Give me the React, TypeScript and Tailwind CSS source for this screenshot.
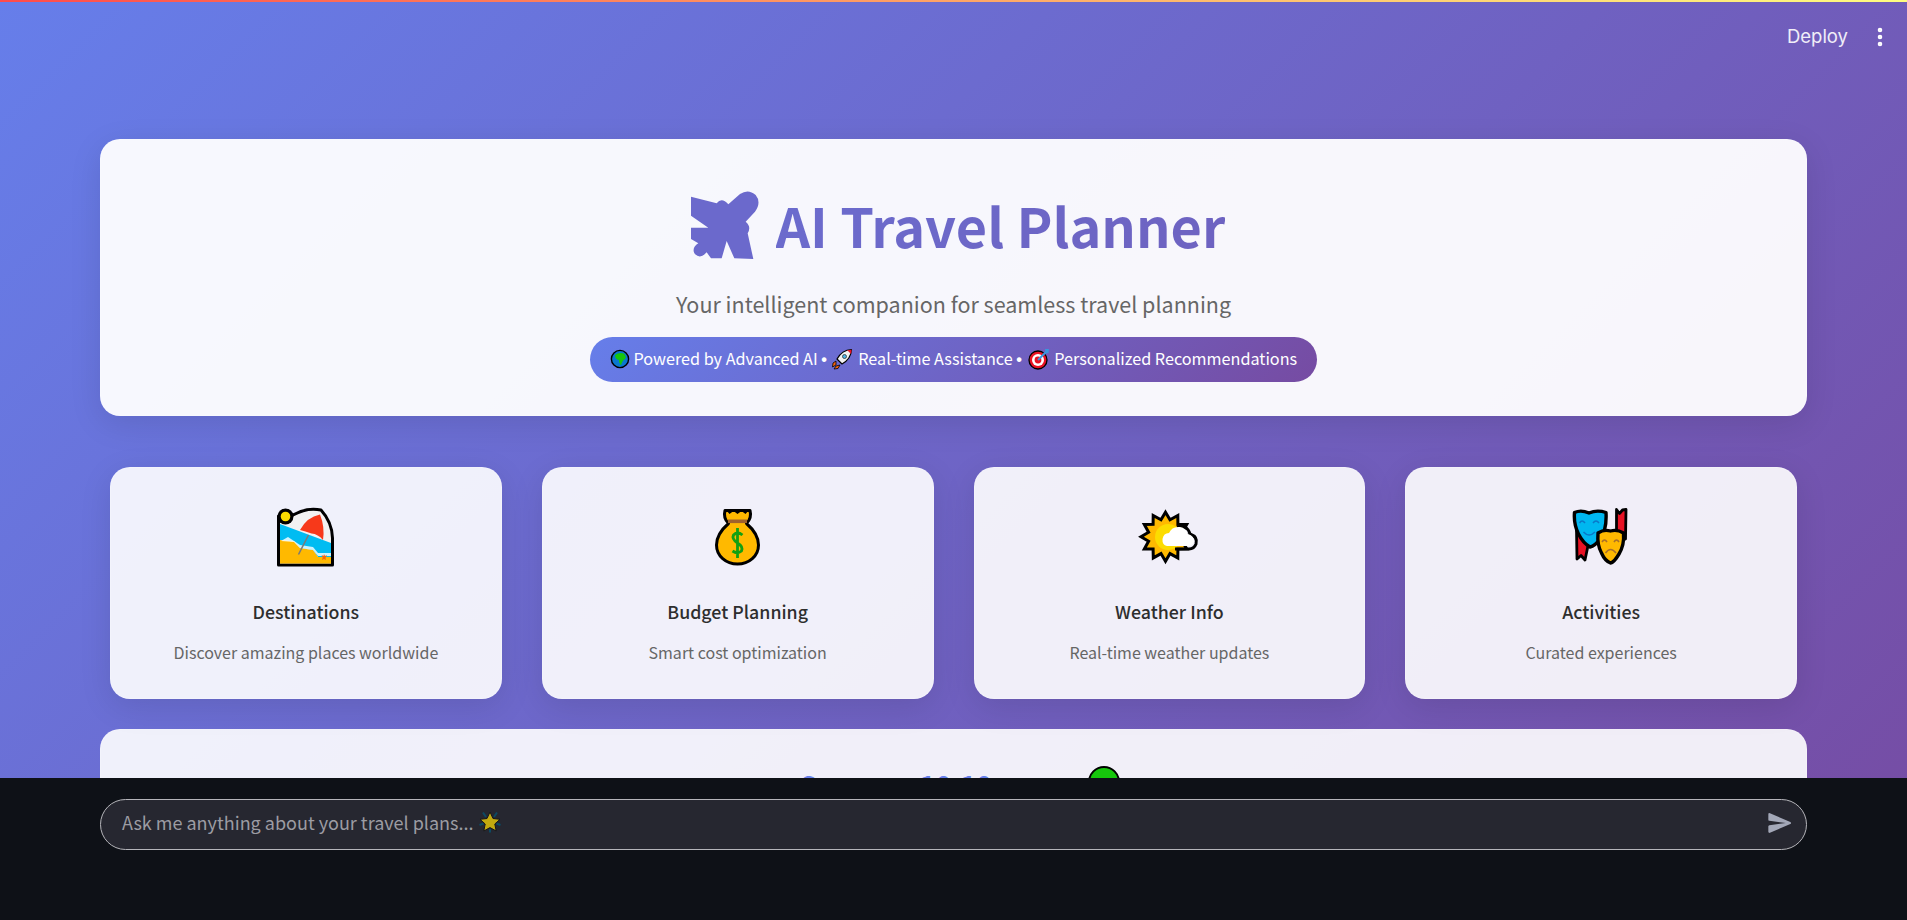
import { MoreVertical } from 'lucide-react';

const features = [
  { title: 'Destinations', text: 'Discover amazing places worldwide', icon: <BeachIcon /> },
  { title: 'Budget Planning', text: 'Smart cost optimization', icon: <BagIcon /> },
  { title: 'Weather Info', text: 'Real-time weather updates', icon: <SunCloudIcon /> },
  { title: 'Activities', text: 'Curated experiences', icon: <MasksIcon /> },
];

function PlaneGlyph() {
  return (
    <svg viewBox="58 38 204 204" className="w-[68px] h-[68px] shrink-0">
      <path
        fill="#6b69cc"
        d="M58 55 L135 75 Q150 55 170 78 L205 47 Q230 30 252 50 Q270 72 250 100 L222 130 Q240 145 228 165 L245 242 L188 240 L165 188 L150 240 L118 240 L105 222 Q85 245 68 225 Q60 208 80 195 L58 182 L58 148 L110 148 L58 112 Z"
      />
    </svg>
  );
}

function BeachIcon() {
  return (
    <svg viewBox="0 0 64 64" className="w-16 h-16">
      <path d="M4.5 60 V11 Q12 4 19 10 Q33 2 47 5 Q58 17 58.5 33 V60 Z" fill="#f2f2f2" stroke="#000" strokeWidth="3" strokeLinejoin="round" />
      <path d="M6 19 L57 38 V52 H44 L39 45 L26 43 L20 36 L6 35 Z" fill="#00bcf2" />
      <path d="M6 35 L20 36.5 L26 43 L39 45 L44 52 H57 V58.5 H6 Z" fill="#ffb900" />
      <path d="M14 32 L20 36 L26 40 L39 42 L44 48 L57 48 V51 H44 L39 45 L26 43 L20 37 L7 36 Z" fill="#fff" opacity="0.8" />
      <path d="M34.5 30 L24.5 49.5" stroke="#7a7a7a" strokeWidth="1.6" />
      <path d="M26 25 Q33 12 46 9.5 Q51 22 49 35 Q44 29 37.5 28.5 Q31 26 26 25 Z" fill="#f7391a" />
      <circle cx="11.5" cy="11.5" r="8" fill="#000" />
      <circle cx="11.5" cy="11.5" r="4.8" fill="#fcdc00" />
      <path d="M50 49 L51 51 L53 50 L51.5 53 L52 55 L50 54 L48 55 L48.7 52.5 L47.5 50 L49.5 51 Z" fill="#f7630c" />
    </svg>
  );
}

function BagIcon() {
  return (
    <svg viewBox="0 0 64 64" className="w-16 h-16">
      <path
        d="M19 5.5 H44 Q46 13 40.5 18.5 C48 25 52.5 31 52.5 40 C52.5 51 43 59 31.5 59 C20 59 10.5 51 10.5 40 C10.5 31 15 25 22.5 18.5 Q17 13 19 5.5 Z"
        fill="#ffb900"
        stroke="#000"
        strokeWidth="3"
        strokeLinejoin="round"
      />
      <path d="M20 5 L23.5 9 L27.5 6 L31.5 9 L35.5 6 L39.5 9 L43 5 Z" fill="#000" />
      <rect x="22" y="14.5" width="19" height="3.6" fill="#a0622d" />
      <path d="M36.5 30 Q31.5 26 27.5 30 Q25.5 34 31.5 38 Q37.5 41.5 35.5 46 Q31.5 49.5 26.5 46 M31.5 23 V53" fill="none" stroke="#12a012" strokeWidth="2.8" />
    </svg>
  );
}

const sunPoints = Array.from({ length: 24 }, (_, i) => {
  const angle = (i * Math.PI) / 12 - Math.PI / 2;
  const r = i % 2 === 0 ? 24.5 : 17.5;
  return `${(28.5 + r * Math.cos(angle)).toFixed(1)},${(31.7 + r * Math.sin(angle)).toFixed(1)}`;
}).join(' ');

function SunCloudIcon() {
  return (
    <svg viewBox="0 0 64 64" className="w-16 h-16">
      <polygon points={sunPoints} fill="#ffb900" stroke="#000" strokeWidth="3" strokeLinejoin="miter" />
      <circle cx="31" cy="32" r="13" fill="#fcdc00" />
      <path d="M40 22 Q50 19 53 29 Q61 32 59 39 Q57 44 52 44 H38" fill="none" stroke="#000" strokeWidth="3" />
      <path d="M30 41 Q25 40 25.5 34 Q26.5 28 32 28 Q35 21 43 22 Q49 23 51 29 Q57.5 31 57 37 Q56 41 51 41 Z" fill="#fff" />
    </svg>
  );
}

function MasksIcon() {
  return (
    <svg viewBox="0 0 64 64" className="w-16 h-16">
      <path d="M7.5 24 L8 54 L12 50.5 L16 55 L20 36 Z" fill="#e81224" stroke="#000" strokeWidth="2.8" strokeLinejoin="round" />
      <path d="M47.5 27 V4.5 L50.5 8.5 L53.5 5 L57 4.5 L56.5 34 L51 36 Z" fill="#e81224" stroke="#000" strokeWidth="2.8" strokeLinejoin="round" />
      <path d="M5.5 7.5 Q12 4.5 20 8 Q28 4.5 37 7.5 Q38 25 31 34 Q26 41 21 42 Q14 38 9.5 29 Q4.5 19 5.5 7.5 Z" fill="#00b7f0" stroke="#000" strokeWidth="3.4" strokeLinejoin="round" />
      <path d="M10.5 18 Q13 14 16 18 M24 18 Q27 14 30 18 M14.5 27 Q20 33 26 27" fill="none" stroke="#0a78c8" strokeWidth="1.5" />
      <path d="M29 28 Q35 24 41.5 26 Q48 24 54.5 28 Q55.5 40 50 49 Q45 57.5 41.5 58 Q36 56 32.5 48 Q28 40 29 28 Z" fill="#ffb900" stroke="#000" strokeWidth="3.4" strokeLinejoin="round" />
      <path d="M33 37 Q35.5 33 38 37 M45 37 Q47.5 33 50 37 M36.5 48 Q41.5 41 47 48" fill="none" stroke="#a9702a" strokeWidth="1.6" />
    </svg>
  );
}

function GlobeIcon() {
  return (
    <svg viewBox="0 0 20 20" className="inline-block w-5 h-5 align-[-4px]">
      <circle cx="10" cy="10" r="8.6" fill="#0a78d0" stroke="#000" strokeWidth="1.4" />
      <path d="M5 6 Q9 3 14 4.5 Q17 8 15 10 Q12 11.5 11 16.5 Q8.5 13 9 11 Q5 10.5 5 6 Z" fill="#16c60c" />
    </svg>
  );
}

function RocketIcon() {
  return (
    <svg viewBox="0 0 22 22" className="inline-block w-[22px] h-[22px] align-[-5px] mr-[2px]">
      <path d="M5 13 L2 15 L1.5 19 L5 17 Z M9 17 L7 20.5 L3 21 L5 18 Z" fill="#f7630c" stroke="#000" strokeWidth="0.8" />
      <path d="M6 11 Q11 2 20.5 1.5 Q20 11 11 16 Z" fill="#f2f2f2" stroke="#000" strokeWidth="1.2" strokeLinejoin="round" />
      <circle cx="13.5" cy="8.5" r="2" fill="#4fb4e8" stroke="#333" strokeWidth="0.8" />
      <path d="M16 2 Q20 2 20.5 1.5 Q20.5 4 20 6 Z" fill="#e81224" />
    </svg>
  );
}

function TargetIcon() {
  return (
    <svg viewBox="0 0 22 22" className="inline-block w-[22px] h-[22px] align-[-5px] ml-[2px] mr-[1px]">
      <circle cx="10" cy="12" r="9" fill="#e81224" stroke="#000" strokeWidth="1.3" />
      <circle cx="10" cy="12" r="6" fill="#fff" />
      <circle cx="10" cy="12" r="3.4" fill="#e81224" />
      <path d="M10 12 L19 3" stroke="#3a96dd" strokeWidth="2" />
      <path d="M17 1 L21 1 L20.5 5 L17.5 5.5 Z" fill="#3a96dd" />
    </svg>
  );
}

function StarIcon() {
  return (
    <svg viewBox="0 0 22 22" className="w-[22px] h-[22px] shrink-0">
      <path d="M4 1.5 L7 6 M18 1.5 L15 6 M0.5 14 L4.5 12.5 M21.5 14 L17.5 12.5 M11 21.5 V18" stroke="#0b4a63" strokeWidth="2" />
      <path d="M11 1 L14 7.5 L21 8.3 L15.8 13 L17.2 20 L11 16.6 L4.8 20 L6.2 13 L1 8.3 L8 7.5 Z" fill="#c2a90f" stroke="#14161c" strokeWidth="1" />
    </svg>
  );
}

function Dot() {
  return <span className="font-['Liberation_Sans',sans-serif] font-bold">•</span>;
}

export default function App() {
  return (
    <div className="h-screen w-full flex flex-col overflow-hidden bg-[linear-gradient(135deg,#667eea_0%,#764ba2_100%)] font-['Noto_Sans_CJK_SC','Noto_Sans',sans-serif]">
      {/* Top stripe */}
      <div className="h-[2px] shrink-0 bg-[linear-gradient(90deg,#ff4b4b,#fffd80)]" />

      {/* Toolbar */}
      <div className="h-[72px] shrink-0 flex items-center justify-end pb-[2px] pr-[15px] text-white">
        <span className="font-['Inter',sans-serif] text-[18.5px] mr-[20px] text-white/90">Deploy</span>
        <MoreVertical className="w-6 h-6" strokeWidth={2.6} />
      </div>

      {/* Scrolling content */}
      <main className="flex-1 min-h-0 overflow-hidden px-[100px] pt-[65px]">
        <section className="h-[277px] rounded-[20px] bg-white/95 border border-white/20 shadow-[0_8px_32px_rgba(0,0,0,0.1)] flex flex-col items-center pt-[43px]">
          <div className="flex items-center gap-[17px] h-[84px] pl-[9px]">
            <PlaneGlyph />
            <h1 className="text-[54px] leading-[84px] font-bold text-transparent bg-clip-text bg-[linear-gradient(135deg,#6b6cce_0%,#6e62c0_100%)]">
              AI Travel Planner
            </h1>
          </div>
          <p className="text-[21.5px] leading-[32px] mt-[21px] text-[#666]">Your intelligent companion for seamless travel planning</p>
          <div className="mt-[17px] h-[45px] w-[727px] rounded-full flex items-center justify-center pb-[2px] text-[16.2px] text-white whitespace-nowrap bg-[linear-gradient(135deg,#667eea_0%,#764ba2_100%)]">
            <span>
              <GlobeIcon /> Powered by Advanced AI <Dot /> <RocketIcon /> Real-time Assistance <Dot /> <TargetIcon /> Personalized Recommendations
            </span>
          </div>
        </section>

        <div className="grid grid-cols-4 gap-[40px] px-[10px] mt-[51px]">
          {features.map((f) => (
            <div
              key={f.title}
              className="h-[232px] rounded-[20px] bg-white/90 border border-white/20 shadow-[0_8px_32px_rgba(0,0,0,0.1)] flex flex-col items-center pt-[37px]"
            >
              {f.icon}
              <h3 className="text-[17.8px] leading-[26px] mt-[29px] font-medium text-[#2e2e2e]">{f.title}</h3>
              <p className="text-[16px] leading-[24px] mt-[16px] text-[#666]">{f.text}</p>
            </div>
          ))}
        </div>

        <section className="h-[300px] mt-[30px] rounded-[20px] bg-white/90 border border-white/20 flex justify-center pt-[35px] pl-[15px]">
          <h2 className="text-[27px] leading-[40px] font-bold text-[#667eea] whitespace-nowrap [word-spacing:26px]">Server 10:10</h2>
          <svg viewBox="0 0 36 36" className="w-9 h-9 ml-[94px] -mt-[1px] shrink-0">
            <circle cx="18" cy="18" r="15" fill="#16c60c" stroke="#000" strokeWidth="2" />
          </svg>
        </section>
      </main>

      {/* Chat input */}
      <div className="h-[142px] shrink-0 bg-[#0e1117] px-[100px] pt-[21px]">
        <div className="h-[51px] rounded-full border border-[#b5b5ba] bg-[#262730] flex items-center pl-[21px] pr-[12px]">
          <span className="text-[18px] leading-[26px] -mt-[6px] text-[#9c9ca3]">Ask me anything about your travel plans...</span>
          <span className="ml-[5px] -mt-[5px]"><StarIcon /></span>
          <svg viewBox="0 0 24 24" className="w-7 h-7 ml-auto -mt-[3px]" fill="#a3a8b8">
            <path d="M3.4 20.4l17.45-7.48a1 1 0 0 0 0-1.84L3.4 3.6a.993.993 0 0 0-1.39.91L2 9.12c0 .5.37.93.87.99L17 12 2.87 13.88c-.5.07-.87.5-.87 1l.01 4.61c0 .71.73 1.2 1.39.91z" />
          </svg>
        </div>
      </div>
    </div>
  );
}
